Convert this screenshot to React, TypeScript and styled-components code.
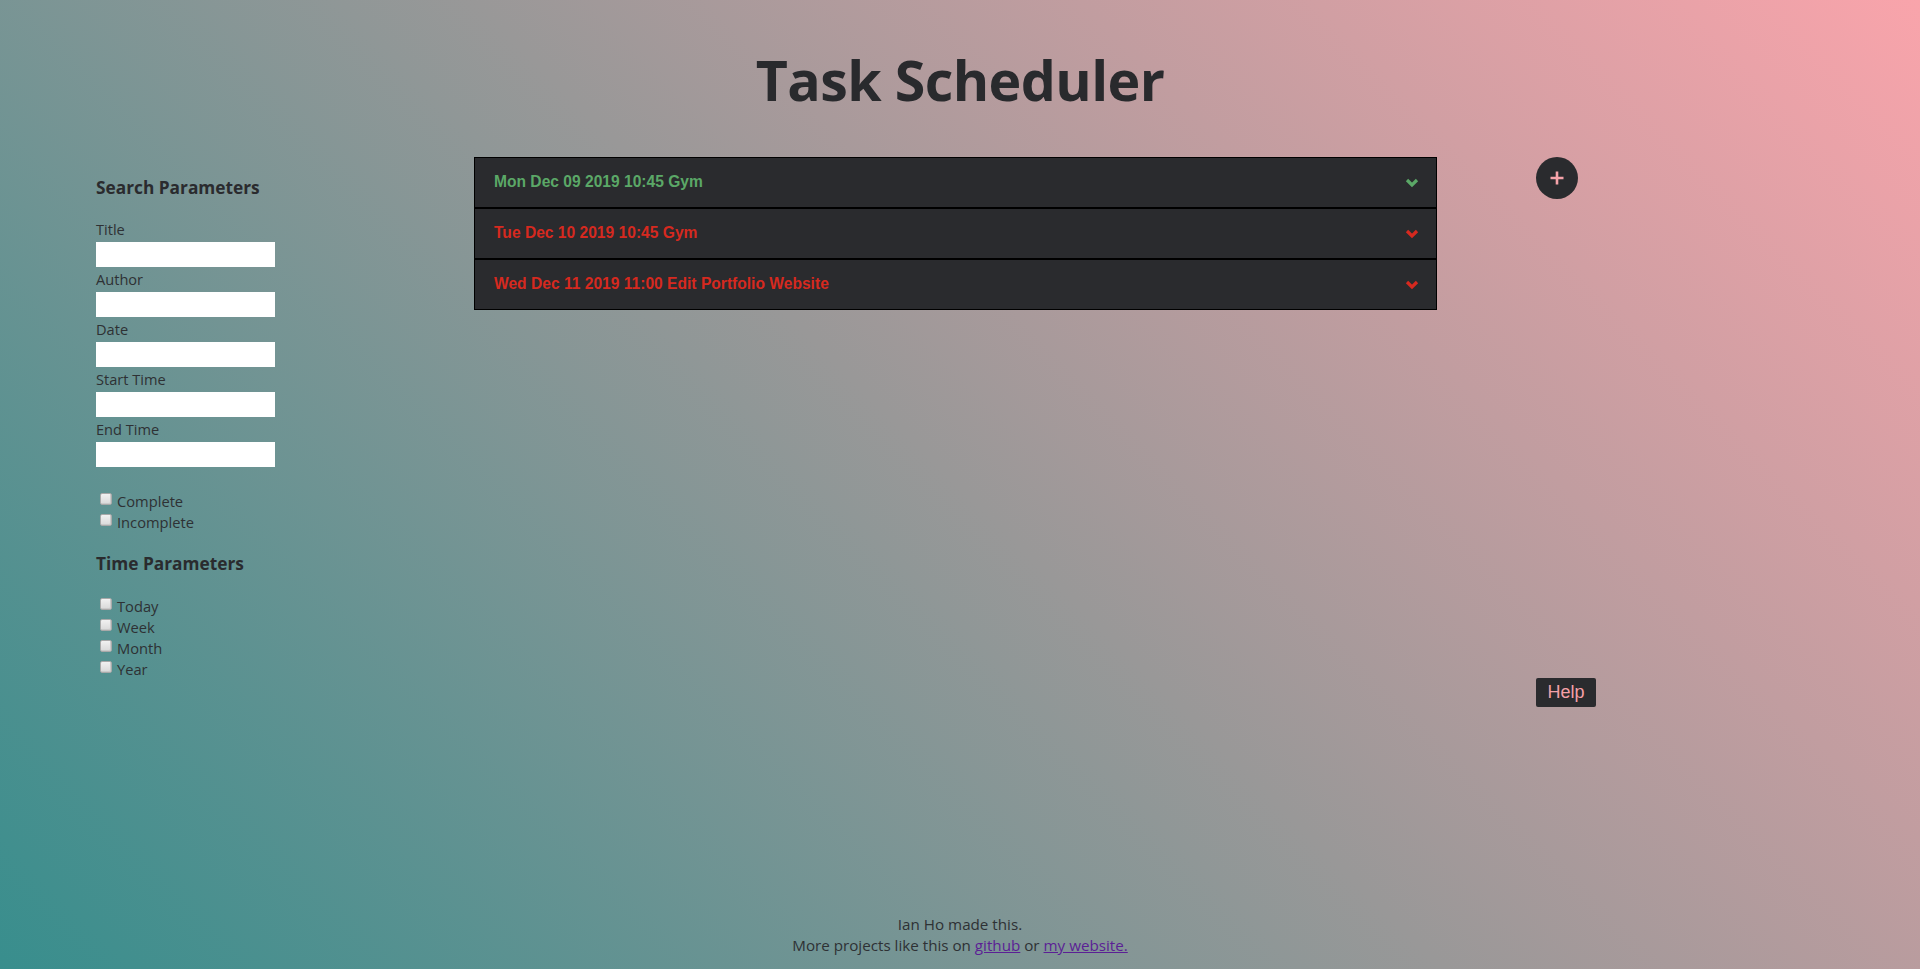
import React from "react";
import styled, { createGlobalStyle } from "styled-components";

const GlobalStyle = createGlobalStyle`
  html, body {
    margin: 0;
    padding: 0;
    height: 100%;
  }
  body {
    font-family: "Open Sans", "Noto Sans", Arial, sans-serif;
    color: #2c2d30;
    background: linear-gradient(45deg, #388e8d 0%, #999898 50%, #f9a4ab 100%);
    background-attachment: fixed;
    overflow: hidden;
  }
  #root { height: 100%; }
  * { box-sizing: border-box; }
`;

const Page = styled.div`
  height: 100%;
  display: flex;
  flex-direction: column;
`;

const Title = styled.h1`
  margin: 0;
  padding-top: 45px;
  height: 157px;
  text-align: center;
  font-size: 55.5px;
  line-height: 70px;
  font-weight: 700;
  color: #292a2d;
  letter-spacing: -0.6px;
`;

const Main = styled.div`
  display: grid;
  grid-template-columns: 378px 963px 1fr;
  padding-left: 96px;
  flex: 1;
`;

const Sidebar = styled.aside`
  display: flex;
  flex-direction: column;
  padding-top: 19px;
`;

const Heading = styled.h3<{ $gap?: number }>`
  margin: 0 0 ${(p) => p.$gap ?? 18}px 0;
  font-size: 17.3px;
  line-height: 23px;
  font-weight: 700;
  color: #2a2b2e;
`;

const Field = styled.label`
  display: flex;
  flex-direction: column;
  font-size: 14.6px;
  line-height: 25px;
  color: #2e3134;
`;

const TextInput = styled.input`
  width: 179px;
  height: 25px;
  border: none;
  outline: none;
  background: #ffffff;
  margin: 0;
  padding: 0 4px;
`;

const CheckGroup = styled.div<{ $top: number; $bottom: number }>`
  display: flex;
  flex-direction: column;
  margin: ${(p) => `${p.$top}px 0 ${p.$bottom}px 0`};
`;

const CheckRow = styled.label`
  display: flex;
  align-items: center;
  height: 21px;
  font-size: 14.7px;
  color: #2e3134;
`;

const Check = styled.input`
  appearance: none;
  -webkit-appearance: none;
  width: 12px;
  height: 12px;
  margin: -3px 5px 0 4px;
  border: 1px solid #a9a9a9;
  border-radius: 2px;
  background: linear-gradient(180deg, #f1f1f1 0%, #d9d9d9 100%);
  box-shadow: inset -1px -1px 0 #cacaca;
  flex-shrink: 0;
`;

const List = styled.div`
  display: flex;
  flex-direction: column;
  align-self: start;
`;

const Task = styled.div<{ $done: boolean }>`
  display: flex;
  align-items: center;
  justify-content: space-between;
  height: 51px;
  padding: 0 17px 1px 19px;
  background: #2a2b2e;
  border: 1px solid #000;
  font-family: "Liberation Sans", Arial, sans-serif;
  font-weight: 700;
  font-size: 15.6px;
  color: ${(p) => (p.$done ? "#5ba867" : "#d6291f")};
`;

const Chevron = styled.svg`
  width: 14px;
  height: 10px;
  margin-top: 1px;
`;

const RightCol = styled.div`
  display: flex;
  flex-direction: column;
  align-items: flex-start;
  padding-left: 99px;
`;

const AddButton = styled.button`
  width: 42px;
  height: 42px;
  border-radius: 50%;
  border: none;
  background: #2a2b2e;
  display: flex;
  align-items: center;
  justify-content: center;
  padding: 0;
  cursor: pointer;
`;

const HelpButton = styled.button`
  margin-top: 479px;
  height: 29px;
  width: 60px;
  padding: 0;
  border: none;
  border-radius: 2px;
  background: #2a2b2e;
  color: #f4a0a8;
  font-family: "Liberation Sans", Arial, sans-serif;
  font-size: 18px;
  cursor: pointer;
`;

const Footer = styled.footer`
  text-align: center;
  font-size: 15.2px;
  line-height: 21px;
  color: #2e3134;
  padding-bottom: 13px;
`;

const Link = styled.a`
  color: #5b1f95;
  text-decoration: underline;
`;

const tasks = [
  { label: "Mon Dec 09 2019 10:45 Gym", done: true },
  { label: "Tue Dec 10 2019 10:45 Gym", done: false },
  { label: "Wed Dec 11 2019 11:00 Edit Portfolio Website", done: false },
];

export default function App() {
  return (
    <>
      <GlobalStyle />
      <Page>
        <Title>Task Scheduler</Title>
        <Main>
          <Sidebar>
            <Heading>Search Parameters</Heading>
            {["Title", "Author", "Date", "Start Time", "End Time"].map((f) => (
              <Field key={f}>
                {f}
                <TextInput type="text" />
              </Field>
            ))}
            <CheckGroup $top={23} $bottom={20}>
              {["Complete", "Incomplete"].map((c) => (
                <CheckRow key={c}>
                  <Check type="checkbox" />
                  {c}
                </CheckRow>
              ))}
            </CheckGroup>
            <Heading $gap={20}>Time Parameters</Heading>
            <CheckGroup $top={0} $bottom={0}>
              {["Today", "Week", "Month", "Year"].map((c) => (
                <CheckRow key={c}>
                  <Check type="checkbox" />
                  {c}
                </CheckRow>
              ))}
            </CheckGroup>
          </Sidebar>
          <List>
            {tasks.map((t) => (
              <Task key={t.label} $done={t.done}>
                <span>{t.label}</span>
                <Chevron viewBox="0 0 14 10">
                  <polyline
                    points="2,2 7,7 12,2"
                    fill="none"
                    stroke="currentColor"
                    strokeWidth="3.2"
                  />
                </Chevron>
              </Task>
            ))}
          </List>
          <RightCol>
            <AddButton aria-label="Add task">
              <svg width="16" height="16" viewBox="0 0 16 16">
                <path d="M8 1.5v13M1.5 8h13" stroke="#f6a3aa" strokeWidth="2.6" />
              </svg>
            </AddButton>
            <HelpButton>Help</HelpButton>
          </RightCol>
        </Main>
        <Footer>
          <div>Ian Ho made this.</div>
          <div>
            More projects like this on <Link href="#">github</Link> or{" "}
            <Link href="#">my website.</Link>
          </div>
        </Footer>
      </Page>
    </>
  );
}
